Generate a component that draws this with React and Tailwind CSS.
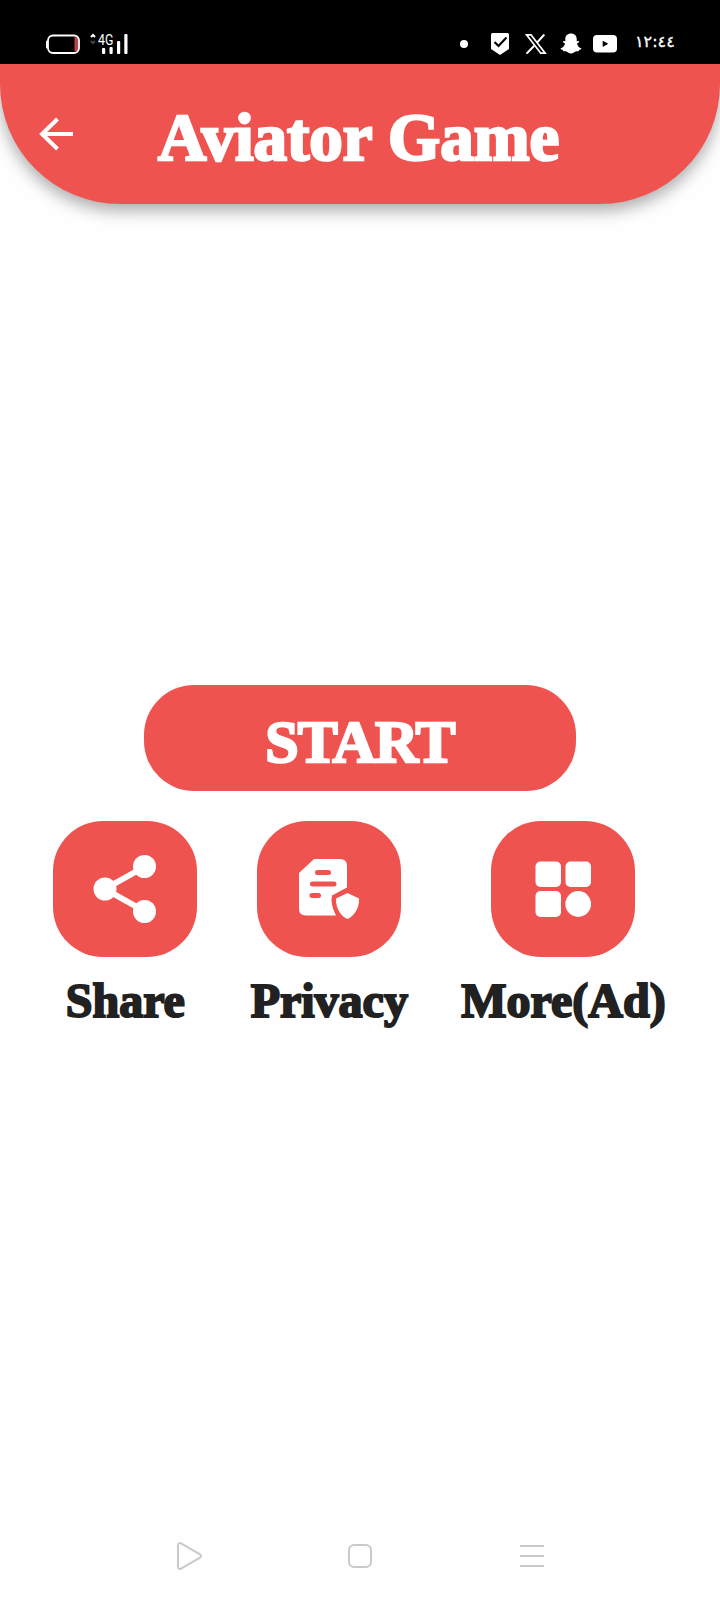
function SignalIcons() {
  return (
    <div className="flex h-full items-start pt-[33px] text-white">
      <svg width="36" height="22" viewBox="0 0 36 22" className="ml-[46px]">
        <rect x="28.5" y="4" width="3.5" height="14" fill="#b5474b" />
        <rect x="2" y="2.5" width="31" height="17.5" rx="5" fill="none" stroke="#fff" strokeWidth="1.8" />
        <rect x="0" y="7.5" width="2" height="8" rx="1" fill="#fff" />
      </svg>
      <div className="relative ml-2 h-[22px] w-10">
        <svg width="40" height="22" viewBox="0 0 40 22">
          <path d="M1 4 3 2 5 4" fill="none" stroke="#fff" strokeWidth="2" />
          <path d="M1 8 3 10 5 8" fill="none" stroke="#444" strokeWidth="2" />
          <rect x="12" y="15" width="3.2" height="6" rx="1" fill="#fff" />
          <rect x="19.5" y="14" width="3.2" height="7" rx="1" fill="#fff" />
          <rect x="27" y="8" width="3.2" height="13" rx="1" fill="#fff" />
          <rect x="34.3" y="1" width="3.2" height="20" rx="1" fill="#fff" />
        </svg>
        <span className="absolute left-2 top-0 origin-left scale-x-[0.88] font-['Roboto',sans-serif] text-[14px] leading-[14px]">4G</span>
      </div>
    </div>
  );
}

function Notifications() {
  return (
    <div className="flex h-full w-[260px] items-start pt-8 text-white">
      <span className="mt-2 size-2 shrink-0 rounded-full bg-white" />
      <svg width="18" height="24" viewBox="0 0 18 24" className="ml-[23px] shrink-0">
        <path d="M1.5 1h15q1.5 0 1.5 1.5V17l-9 6-9-6V2.5Q0 1 1.5 1Z" fill="#fff" />
        <path d="m3.500 10 4 4 8-8.500" fill="none" stroke="#000" strokeWidth="2.200" />
      </svg>
      <svg width="22" height="20" viewBox="0 0 22 20" className="ml-4 mt-[2px] shrink-0" fill="none" stroke="#fff">
        <path d="M1.500 0.800H6L20.200 19.200H15.800Z" strokeWidth="1.700" />
        <path d="M19.300 0.500 11.800 8.800M9.200 11.800 1.500 19.700" strokeWidth="2" />
      </svg>
      <svg width="22" height="22" viewBox="0 0 22 22" className="ml-[13px] mt-[1px] shrink-0">
        <path d="M11 .5C7.500.5 5.300 2.800 5.300 6v2.200L3.300 8q-.8.700 0 1.400l1.700 1.100C4.500 13 2.800 14.800.5 15.500q-.3.900 2.300 1.500l.6 1.300c1.500 0 2.800-.2 4.300.9 2.400 1.800 4.200 1.800 6.600 0 1.500-1.100 2.800-.9 4.300-.9l.6-1.300q2.600-.6 2.300-1.500c-2.300-.7-4-2.500-4.500-5l1.700-1.100q.8-.7 0-1.400l-2 .2V6C16.700 2.800 14.500.5 11 .5Z" fill="#fff" />
      </svg>
      <svg width="24" height="18" viewBox="0 0 24 18" className="ml-[11px] mt-[3px] shrink-0">
        <rect width="24" height="17.500" rx="4" fill="#fff" />
        <path d="M9.700 5.700v6.200l5.600-3.100Z" fill="#000" />
      </svg>
      <span dir="ltr" className="ml-[18px] -mt-px w-[42px] whitespace-nowrap font-['DejaVu_Sans',sans-serif] text-[16px] leading-[22px] [-webkit-text-stroke:0.3px_white]">١٢:٤٤</span>
    </div>
  );
}

function Action({ label, children }) {
  return (
    <div className="flex flex-col items-center">
      <button aria-label={label} className="flex h-[136px] w-36 items-center justify-center rounded-[50px] bg-[#ef5350]">
        {children}
      </button>
      <span className="mt-4 text-[48px] leading-[56px] text-[#212121] [-webkit-text-stroke:2px_#212121]">{label}</span>
    </div>
  );
}

export default function App() {
  return (
    <div className="flex h-[1600px] w-[720px] flex-col bg-[#fefefe] font-['Liberation_Serif',serif] font-bold">
      <div className="flex h-16 shrink-0 justify-between bg-black font-normal">
        <SignalIcons />
        <Notifications />
      </div>
      <header className="flex h-[140px] shrink-0 items-start rounded-b-[120px] bg-[#ef5350] text-white shadow-[0_7px_16px_rgba(0,0,0,0.32)]">
        <svg width="34" height="34" viewBox="0 0 34 34" className="ml-[39px] mt-[53px]">
          <path d="M34 17H4M18.500 2 3 17l15.500 15" fill="none" stroke="#fff" strokeWidth="4" />
        </svg>
        <h1 className="ml-[85px] mt-[35px] whitespace-nowrap text-[67px] leading-[76px] [-webkit-text-stroke:2.6px_white]">Aviator Game</h1>
      </header>
      <main className="flex grow flex-col items-center pt-[481px]">
        <button className="h-[106px] w-[432px] rounded-[50px] bg-[#ef5350] pt-[7px] text-[60px] tracking-[-0.8px] text-white [-webkit-text-stroke:2.4px_white]">START</button>
        <div className="mt-[30px] flex w-full justify-evenly pr-[1px]">
          <Action label="Share">
            <svg width="64" height="70" viewBox="0 0 64 70">
              <path d="M52 12.500 12 35l40 22.500" fill="none" stroke="#fff" strokeWidth="6" />
              <circle cx="51.500" cy="12.500" r="11.500" fill="#fff" />
              <circle cx="12" cy="35" r="11.500" fill="#fff" />
              <circle cx="51.500" cy="57.500" r="11.500" fill="#fff" />
            </svg>
          </Action>
          <Action label="Privacy">
            <svg width="60" height="60" viewBox="0 0 60 60">
              <path d="M15 0H41Q48 0 48 7V28.500L33 36.500Q31 45 37 56.500H7Q0 56.500 0 49.500V14Z" fill="#fff" />
              <path d="M18.500 13.500h11M13.500 25h21.500M13 36.500h6.500" fill="none" stroke="#ef5350" strokeWidth="5" strokeLinecap="round" />
              <path d="M48.500 34 60 39.500C60.500 48 56 57 48.500 60 41 57 36.500 48 37 39.500Z" fill="#fff" />
            </svg>
          </Action>
          <Action label="More(Ad)">
            <svg width="56" height="56" viewBox="0 0 56 56">
              <rect x="0.500" y="0.500" width="25.500" height="25.500" rx="5" fill="#fff" />
              <rect x="30.500" y="0.500" width="25.500" height="25.500" rx="5" fill="#fff" />
              <rect x="0.500" y="30" width="25.500" height="26" rx="5" fill="#fff" />
              <circle cx="43.250" cy="43" r="12.900" fill="#fff" />
            </svg>
          </Action>
        </div>
      </main>
      <nav className="grid h-[88px] shrink-0 grid-cols-[28px_24px_24px] items-center gap-x-36 pl-[176px]">
        <svg width="28" height="28" viewBox="0 0 28 28">
          <path d="M2 3.500Q2 0 5 1.500L24 12.300Q26 14 24 15.700L5 26.500Q2 28 2 24.500Z" fill="none" stroke="#c9c9c9" strokeWidth="2" />
        </svg>
        <svg width="24" height="24" viewBox="0 0 24 24">
          <rect x="1" y="1" width="22" height="22" rx="5" fill="none" stroke="#c9c9c9" strokeWidth="2" />
        </svg>
        <svg width="28" height="24" viewBox="0 0 28 24" className="ml-1">
          <path d="M0 2H24M0 12H24M0 22H24" stroke="#c9c9c9" strokeWidth="2.200" />
        </svg>
      </nav>
    </div>
  );
}
